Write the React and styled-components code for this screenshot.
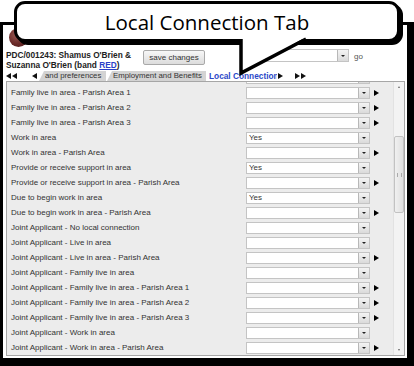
import React from 'react';
import styled, { createGlobalStyle } from 'styled-components';

const Global = createGlobalStyle`
  html, body { margin: 0; padding: 0; background: #fff; }
  body { width: 414px; height: 366px; overflow: hidden; font-family: "Liberation Sans", Arial, sans-serif; }
`;

const Stage = styled.div`
  position: relative;
  width: 414px;
  height: 366px;
  padding-top: 22px;
  box-sizing: border-box;
`;

const Frame = styled.div`
  box-sizing: border-box;
  height: 344px;
  border-style: solid;
  border-color: #000;
  border-width: 3px 7px 8px 3px;
  background: #fff;
  display: flex;
  flex-direction: column;
  padding: 0 2px 2px 3px;
`;

const LogoRow = styled.div`
  height: 24px;
  flex: none;
`;

const Logo = styled.div`
  margin: 3px 0 0 3px;
  width: 19px;
  height: 19px;
  border-radius: 50%;
  background: radial-gradient(circle at 40% 35%, #9a5b55 0%, #6a2a28 55%, #4a1818 100%);
`;

const Header = styled.div`
  display: flex;
  align-items: flex-start;
  height: 21px;
  flex: none;
`;

const Title = styled.div`
  width: 137px;
  font-size: 8.3px;
  font-weight: bold;
  line-height: 10px;
  color: #222;
  padding-top: 1px;
  white-space: nowrap;
`;

const Link = styled.span`
  color: #2a3fc8;
  text-decoration: underline;
`;

const Button = styled.div`
  box-sizing: border-box;
  width: 62px;
  height: 15px;
  margin-top: 1px;
  border: 1px solid #a9a9a9;
  border-radius: 2px;
  background: linear-gradient(#f7f7f7, #dcdcdc);
  font-size: 8px;
  color: #333;
  display: flex;
  align-items: center;
  justify-content: center;
`;

const Select = styled.div`
  box-sizing: border-box;
  width: ${p => p.$w}px;
  height: ${p => p.$h}px;
  margin-left: ${p => p.$ml || 0}px;
  border: 1px solid #c4c4c4;
  background: #fff;
  display: flex;
  align-items: center;
  font-size: 8px;
  color: #333;
  flex: none;
`;

const SelectValue = styled.span`
  flex: 1;
  padding-left: 2px;
`;

const DropBtn = styled.span`
  box-sizing: border-box;
  width: 11px;
  height: 100%;
  border-left: 1px solid #b8b8b8;
  background: linear-gradient(#f4f4f4, #dadada);
  display: flex;
  align-items: center;
  justify-content: center;
  &::after {
    content: '';
    border-left: 2px solid transparent;
    border-right: 2px solid transparent;
    border-top: 2px solid #222;
  }
`;

const Go = styled.span`
  margin: 3px 0 0 5px;
  font-size: 8px;
  color: #555;
`;

const TabRow = styled.div`
  display: flex;
  align-items: flex-end;
  height: 11px;
  flex: none;
  font-size: 7.8px;
`;

const Nav = styled.span`
  display: flex;
  align-items: center;
  gap: 1px;
  height: 10px;
  margin-left: ${p => p.$ml || 0}px;
  width: ${p => p.$w}px;
  flex: none;
`;

const Tri = styled.span`
  width: 0;
  height: 0;
  border-top: 3px solid transparent;
  border-bottom: 3px solid transparent;
  ${p => p.$dir === 'left' ? 'border-right: 5px solid #111;' : 'border-left: 5px solid #111;'}
`;

const Tab = styled.span`
  box-sizing: border-box;
  height: 10px;
  width: ${p => p.$w}px;
  padding-left: ${p => p.$pl || 6}px;
  background: ${p => p.$active ? '#fff' : '#d3d3d3'};
  color: ${p => p.$active ? '#2b48c8' : '#333'};
  font-weight: ${p => p.$active ? 'bold' : 'normal'};
  font-size: ${p => p.$active ? '8.3px' : '7.8px'};
  clip-path: ${p => p.$active ? 'none' : 'polygon(5px 0, 100% 0, 100% 100%, 0 100%)'};
  white-space: nowrap;
  overflow: hidden;
  line-height: 10px;
  flex: none;
  margin-right: 1px;
`;

const Panel = styled.div`
  flex: 1;
  display: flex;
  border: 1px solid #a6a6a6;
  background: #ececec;
  overflow: hidden;
`;

const List = styled.div`
  flex: 1;
  overflow: hidden;
  padding-left: 4px;
`;

const Rows = styled.div`
  margin-top: -12px;
`;

const Row = styled.div`
  display: flex;
  align-items: center;
  height: 15px;
`;

const Label = styled.span`
  width: 235px;
  flex: none;
  font-size: 8px;
  color: #333;
  white-space: nowrap;
`;

const Arrow = styled.span`
  margin-left: 4px;
  width: 0;
  height: 0;
  border-top: 3px solid transparent;
  border-bottom: 3px solid transparent;
  border-left: 5px solid #000;
`;

const Scrollbar = styled.div`
  width: 10px;
  flex: none;
  display: flex;
  flex-direction: column;
  background: #f3f3f3;
  border-left: 1px solid #e2e2e2;
`;

const ScrollBtn = styled.div`
  height: 10px;
  display: flex;
  align-items: center;
  justify-content: center;
  &::after {
    content: '';
    border-left: 1.5px solid transparent;
    border-right: 1.5px solid transparent;
    ${p => p.$up ? 'border-bottom: 2px solid #666;' : 'border-top: 2px solid #666;'}
  }
`;

const Track = styled.div`
  flex: 1;
`;

const Thumb = styled.div`
  box-sizing: border-box;
  margin: 44px 0 0 0;
  height: 77px;
  border: 1px solid #c2c2c2;
  border-radius: 2px;
  background: linear-gradient(90deg, #f0f0f0, #e0e0e0);
  display: flex;
  align-items: center;
  justify-content: center;
  &::after {
    content: '';
    width: 3px;
    height: 4px;
    border-left: 1px solid #aaa;
    border-right: 1px solid #aaa;
  }
`;

const Callout = styled.div`
  position: absolute;
  left: 14px;
  top: 1px;
  width: 386px;
  height: 41px;
  box-sizing: border-box;
  border: 3px solid #000;
  border-radius: 11px;
  background: #fff;
  box-shadow: 3px 3px 0 #000;
  display: flex;
  align-items: center;
  justify-content: center;
  font-family: "Open Sans", sans-serif;
  font-size: 20.5px;
  color: #000;
  z-index: 2;
`;

const Tail = styled.svg`
  position: absolute;
  left: 236px;
  top: 36px;
  z-index: 3;
  overflow: visible;
`;

const rows = [
  { label: '', arrow: false },
  { label: 'Family live in area - Parish Area 1', arrow: true },
  { label: 'Family live in area - Parish Area 2', arrow: true },
  { label: 'Family live in area - Parish Area 3', arrow: true },
  { label: 'Work in area', value: 'Yes' },
  { label: 'Work in area - Parish Area', arrow: true },
  { label: 'Provide or receive support in area', value: 'Yes' },
  { label: 'Provide or receive support in area - Parish Area', arrow: true },
  { label: 'Due to begin work in area', value: 'Yes' },
  { label: 'Due to begin work in area - Parish Area', arrow: true },
  { label: 'Joint Applicant - No local connection' },
  { label: 'Joint Applicant - Live in area' },
  { label: 'Joint Applicant - Live in area - Parish Area', arrow: true },
  { label: 'Joint Applicant - Family live in area' },
  { label: 'Joint Applicant - Family live in area - Parish Area 1', arrow: true },
  { label: 'Joint Applicant - Family live in area - Parish Area 2', arrow: true },
  { label: 'Joint Applicant - Family live in area - Parish Area 3', arrow: true },
  { label: 'Joint Applicant - Work in area' },
  { label: 'Joint Applicant - Work in area - Parish Area', arrow: true },
];

export default function App() {
  return (
    <>
      <Global />
      <Stage>
        <Frame>
          <LogoRow><Logo /></LogoRow>
          <Header>
            <Title>
              PDC/001243: Shamus O'Brien &amp;<br />
              Suzanna O'Brien (band <Link>RED</Link>)
            </Title>
            <Button>save changes</Button>
            <Select $w={104} $h={13} $ml={40}>
              <SelectValue />
              <DropBtn />
            </Select>
            <Go>go</Go>
          </Header>
          <TabRow>
            <Nav $w={14} $ml={0}><Tri $dir="left" /><Tri $dir="left" /></Nav>
            <Nav $w={7} $ml={12}><Tri $dir="left" /></Nav>
            <Tab $w={67}>and preferences</Tab>
            <Tab $w={99}>Employment and Benefits</Tab>
            <Tab $w={70} $active $pl={2}>Local Connection</Tab>
            <Nav $w={17}><Tri $dir="right" /></Nav>
            <Nav $w={14}><Tri $dir="right" /><Tri $dir="right" /></Nav>
          </TabRow>
          <Panel>
            <List>
              <Rows>
                {rows.map((r, i) => (
                  <Row key={i}>
                    <Label>{r.label}</Label>
                    <Select $w={124} $h={12}>
                      <SelectValue>{r.value || ''}</SelectValue>
                      <DropBtn />
                    </Select>
                    {r.arrow && <Arrow />}
                  </Row>
                ))}
              </Rows>
            </List>
            <Scrollbar>
              <ScrollBtn $up />
              <Track><Thumb /></Track>
              <ScrollBtn />
            </Scrollbar>
          </Panel>
        </Frame>
        <Callout>Local Connection Tab</Callout>
        <Tail width="76" height="42" viewBox="0 0 76 42">
          <polygon points="5,0 5,37 72,0" fill="#fff" />
          <polyline points="5,3 5,37 70,3" fill="none" stroke="#000" strokeWidth="3.5" strokeLinejoin="miter" />
        </Tail>
      </Stage>
    </>
  );
}
